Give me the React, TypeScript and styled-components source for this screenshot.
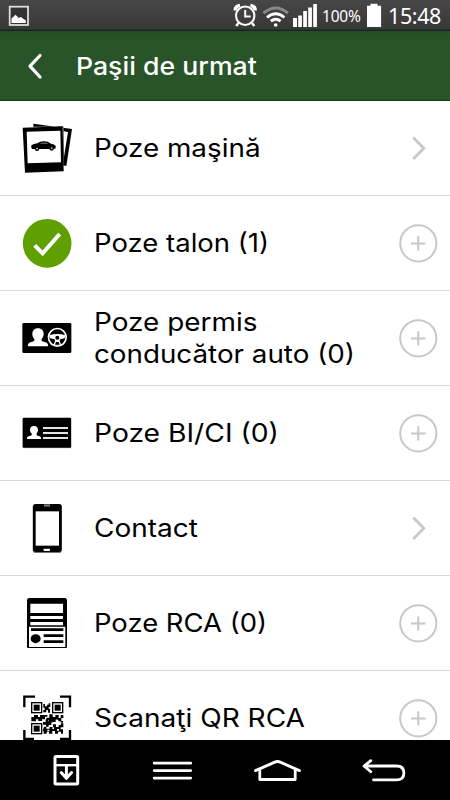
import React from "react";
import styled, { createGlobalStyle } from "styled-components";

const GlobalStyle = createGlobalStyle`
  *, *::before, *::after { box-sizing: border-box; }
  html, body { margin: 0; padding: 0; background: #fff; }
`;

const Screen = styled.div`
  display: flex;
  flex-direction: column;
  width: 450px;
  height: 800px;
  overflow: hidden;
  background: #fff;
  color: #000;
  font-family: Inter, "Noto Sans", sans-serif;
`;

const StatusBar = styled.div`
  flex: 0 0 31px;
  display: flex;
  align-items: center;
  justify-content: space-between;
  background: linear-gradient(#474747, #383838 29px, #1f2422 30px);
  color: #fff;
  font-family: "Noto Sans", sans-serif;
`;

const StatusGroup = styled.div`
  display: flex;
  align-items: center;
  height: 31px;
`;

const StatusText = styled.span<{ $size: number; $width: number; $gap?: number }>`
  width: ${(p) => p.$width}px;
  font-size: ${(p) => p.$size}px;
  letter-spacing: ${(p) => p.$gap ?? 0}px;
  line-height: 32px;
  white-space: nowrap;
`;

const Header = styled.header`
  flex: 0 0 70px;
  display: flex;
  align-items: center;
  background: linear-gradient(#234d22, #295328 10px, #295328 68px, #174018 69px);
  color: #fff;
`;

const BackButton = styled.button`
  width: 76px;
  height: 70px;
  padding: 0;
  border: 0;
  background: none;
`;

const Title = styled.h1`
  margin: 0;
  font-size: 24.5px;
  font-weight: 450;
  line-height: 70px;
  transform: scaleX(1.088);
  transform-origin: left center;
`;

const List = styled.main`
  flex: 1 1 0;
  min-height: 0;
  overflow: hidden;
`;

const Row = styled.div`
  display: flex;
  align-items: center;
  height: 95px;
  padding: 0 12px 0 22px;
  border-bottom: 1px solid #d9d9d9;
`;

const Label = styled.div`
  flex: 1;
  padding-left: 22px;
  font-size: 25px;
  font-weight: 430;
  line-height: 32px;
`;

const Line = styled.span<{ $stretch: number }>`
  display: block;
  white-space: nowrap;
  transform: scaleX(${(p) => p.$stretch});
  transform-origin: left center;
`;

const Drawing = styled.svg`
  display: block;
  flex: none;
`;

const NavBar = styled.nav`
  flex: 0 0 60px;
  display: grid;
  grid-template-columns: repeat(4, 105.5px);
  padding-left: 14px;
  background: #000;
`;

/* Row icons share one grid: three units per pixel, 150 units square. */
const RowIcon = ({ children }: { children: React.ReactNode }) => (
  <Drawing width="50" height="50" viewBox="36 39 150 150">
    {children}
  </Drawing>
);

const PhotosIcon = () => (
  <RowIcon>
    <path d="M70 41 186 57 169 168 160 166V50H70Z" />
    <path d="M161 64 174 66 162 140Z" fill="#fff" />
    <path d="M38 53 158 49 161 184 45 188Z" />
    <path d="M50 65 151 62 153 157 53 160Z" fill="#fff" />
    <path d="M64 106q7-5 18-6 8-6 18-6 13-1 23 7 10 1 14 6v8l-5 2H67l-3-3Z" />
    <circle cx="81" cy="116" r="7" />
    <circle cx="125" cy="115" r="7" />
    <path d="M88 101q8-4 22-3l5 4Z" fill="#666" />
    <g fill="#aaa">
      <circle cx="81" cy="116" r="3" />
      <circle cx="125" cy="115" r="3" />
    </g>
  </RowIcon>
);

const CheckIcon = () => (
  <RowIcon>
    <circle cx="111.5" cy="115" r="73" fill="#5f9f00" />
    <path d="M74 121 98 145 149 87" fill="none" stroke="#fff" strokeWidth="12" />
  </RowIcon>
);

const LicenceIcon = () => (
  <RowIcon>
    <rect x="37" y="69" width="147" height="90" rx="4" />
    <path
      d="M84 85c11 0 17 7 17 17 0 7-3 11-6 15v5c3 4 19 3 19 13v4H54v-4c0-10 16-9 19-13v-5c-4-4-6-8-6-15 0-10 6-17 17-17Z"
      fill="#fff"
    />
    <circle cx="142" cy="112" r="26.5" fill="none" stroke="#fff" strokeWidth="5" />
    <path d="M118 106q24-8 48 0l-2 9-14 3-1 5 5 12h-24l5-12-1-5-14-3Z" fill="#fff" />
    <circle cx="142" cy="113" r="6" />
    <path d="M135 134l3-8h8l3 8Z" />
  </RowIcon>
);

const IdCardIcon = () => (
  <RowIcon>
    <rect x="38" y="69" width="147" height="91" rx="4" fill="#bbb" />
    <rect x="38" y="68" width="145" height="90" rx="3" />
    <path
      d="M72 93c8 0 12 5 12 12 0 5-2 8-4 10v5c2 4 13 2 13 9v3H51v-3c0-7 12-5 14-9v-5c-3-2-5-5-5-10 0-7 4-12 12-12Z"
      fill="#fff"
    />
    <path d="M99 99h75M99 114h75M99 129h75" stroke="#e2e6e4" strokeWidth="6" />
  </RowIcon>
);

const PhoneIcon = () => (
  <RowIcon>
    <rect x="68" y="42" width="88" height="147" rx="10" fill="#777" />
    <rect x="69" y="42" width="86" height="144" rx="9" />
    <path d="M77 64h70v103H77Z" fill="#fff" />
    <path d="M102 43h18v7h-18Z" fill="#777" />
    <rect x="101" y="176" width="19" height="7" rx="2" fill="#fff" />
  </RowIcon>
);

const PolicyIcon = () => (
  <RowIcon>
    <rect x="51" y="39" width="120" height="152" rx="7" />
    <path d="M61 56h98v28H61ZM61 93h98v9H61ZM61 111h98v10H61Z" fill="#fff" />
    <path d="M57 125h109v61H57Z" fill="#fff" />
    <path d="M63 134h97M101 152h59M101 170h59" stroke="#000" strokeWidth="8.5" />
    <ellipse cx="77" cy="161" rx="15" ry="13.5" />
  </RowIcon>
);

const FINDERS: [number, number][] = [
  [63, 66],
  [126, 66],
  [63, 129],
];

const QrIcon = () => (
  <RowIcon>
    <path d="M43 82V50H75M150 50H180V82M43 150V177H72M150 177H180V150" fill="none" stroke="#000" strokeWidth="7" />
    {FINDERS.map(([x, y]) => (
      <g key={`${x}-${y}`}>
        <rect x={x + 2} y={y + 2} width="30" height="30" fill="#fff" stroke="#000" strokeWidth="4" />
        <rect x={x + 8} y={y + 8} width="18" height="18" />
      </g>
    ))}
    <path d="M100 72h5v7h6v-5h5v-4h5v11h-5v5h4v12h-6v-8h-5v7h-9v-7h4v-7h-4Z" />
    <path d="M64 111h8v-6h12v6h6v-6h22v5h-7v8h-9v5H85v-5h-7v6H64Z" />
    <path d="M118 103h10v8h8v-6h10v9h6v-9h8v9h-6v10h-9v-5h-8v7h-8v-6h-5v8h-8v-7h-7v-8h9Z" />
    <path d="M99 126h8v-8h7v6h9v-6h7v9h-6v8h-8v5h-8v-6h-9Z" />
    <path d="M102 140h7v6h10v-5h10v-8h9v8h8v-6h7v-5h7v12h-8v6h7v13h-6v-6h-9v6h-9v-8h-8v8h-10v-6h-7v6h-9v-8h-3Z" />
    <path d="M112 149h6v5h-6ZM127 142h5v5h-5ZM141 147h6v5h-6ZM138 119h5v4h-5Z" fill="#fff" />
    <path d="M152 128h7v-5h-7Z" />
  </RowIcon>
);

const ChevronIcon = () => (
  <Drawing width="40" height="40" viewBox="0 0 40 40" fill="none" stroke="#c7c7cc" strokeWidth="2.8">
    <path d="M15.2 9.6 25.8 20.3 15.2 31" />
  </Drawing>
);

const AddIcon = () => (
  <Drawing width="40" height="40" viewBox="0 0 40 40" fill="none" stroke="#c7c7cc" strokeWidth="2">
    <circle cx="20.3" cy="20.3" r="18.1" />
    <path d="M13 20.4h14.6M20.3 13.2v14.4" />
  </Drawing>
);

type Step = {
  icon: React.ReactNode;
  lines: [string, number][];
  action: "open" | "add";
};

const steps: Step[] = [
  { icon: <PhotosIcon />, lines: [["Poze maşină", 1.114]], action: "open" },
  { icon: <CheckIcon />, lines: [["Poze talon (1)", 1.1]], action: "add" },
  { icon: <LicenceIcon />, lines: [["Poze permis", 1.117], ["conducător auto (0)", 1.111]], action: "add" },
  { icon: <IdCardIcon />, lines: [["Poze BI/CI (0)", 1.13]], action: "add" },
  { icon: <PhoneIcon />, lines: [["Contact", 1.12]], action: "open" },
  { icon: <PolicyIcon />, lines: [["Poze RCA (0)", 1.097]], action: "add" },
  { icon: <QrIcon />, lines: [["Scanaţi QR RCA", 1.122]], action: "add" },
];

export default function App() {
  return (
    <Screen>
      <GlobalStyle />
      <StatusBar>
        <Drawing width="40" height="31" viewBox="0 0 40 31">
          <rect x="9.7" y="6.7" width="18.3" height="18.3" fill="#333" stroke="#ddd" strokeWidth="1.8" />
          <path d="M11.5 23v-4.5l4-3.7 3.3 3.3 2-1.2 5 3.5V23Z" fill="#fff" />
        </Drawing>
        <StatusGroup>
          <Drawing width="97" height="31" viewBox="225 0 97 31" fill="none" stroke="#fff">
            <circle cx="245.2" cy="15.7" r="9.2" strokeWidth="2" />
            <path d="M245.2 10v6.5h5.4" strokeWidth="2" />
            <path d="M235.2 10.5q0-4.5 4.8-5M255.2 10.5q0-4.5-4.8-5" strokeWidth="3.4" />
            <path d="m238.5 23-2.3 3M252 23l2.3 3" strokeWidth="2.5" />
            <path d="M263.4 13.2q12.3-10.5 24.6 0" stroke="#888" strokeWidth="3" />
            <path d="M267 17.5q8.7-7.5 17.4 0M270.8 21.2q4.9-4 9.8 0" strokeWidth="2.8" />
            <circle cx="275.7" cy="25" r="1.8" fill="#fff" stroke="none" />
            <path
              d="M293 27v-9h4v9ZM298.2 27V15.5h3.7V27ZM303.2 27V11h3.7v16ZM308.2 27V7.5h3.7V27ZM313.2 27V4h3.7v23Z"
              fill="#fff"
              stroke="none"
            />
          </Drawing>
          <StatusText $size={15.5} $width={43} $gap={-0.2}>100%</StatusText>
          <Drawing width="23" height="31" viewBox="365 0 23 31" fill="#fff">
            <path d="M367 5.7h3.5V3.7h7v2h3.6V27H367Z" />
          </Drawing>
          <StatusText $size={21.5} $width={62} $gap={-0.4}>15:48</StatusText>
        </StatusGroup>
      </StatusBar>
      <Header>
        <BackButton aria-label="Înapoi">
          <Drawing width="76" height="70" viewBox="0 31 76 70" fill="none" stroke="#fff" strokeWidth="3.2" strokeLinecap="round" strokeLinejoin="round">
            <path d="M40 55.5 30 66.2 40 77" />
          </Drawing>
        </BackButton>
        <Title>Paşii de urmat</Title>
      </Header>
      <List>
        {steps.map((step, i) => (
          <Row key={i}>
            {step.icon}
            <Label>
              {step.lines.map(([text, stretch]) => (
                <Line key={text} $stretch={stretch}>{text}</Line>
              ))}
            </Label>
            {step.action === "open" ? <ChevronIcon /> : <AddIcon />}
          </Row>
        ))}
      </List>
      <NavBar>
        <Drawing width="105" height="60" viewBox="14 740 105 60" fill="none" stroke="#fff" strokeWidth="3">
          <rect x="55" y="756.5" width="22.7" height="27.5" rx="1" />
          <path d="M55 765.2h22.7" strokeWidth="2.4" />
          <path d="M66.4 766v12" />
          <path d="m61.2 772.5 5.2 5.8 5.2-5.8" strokeLinecap="round" strokeLinejoin="round" />
        </Drawing>
        <Drawing width="105" height="60" viewBox="119.5 740 105 60" fill="none" stroke="#fff" strokeWidth="2.8" strokeLinecap="round">
          <path d="M153.7 763.2h36.5M153.7 770.6h36.5M153.7 778.1h36.5" />
        </Drawing>
        <Drawing width="105" height="60" viewBox="225 740 105 60" fill="none" stroke="#fff" strokeWidth="2.8" strokeLinecap="round" strokeLinejoin="round">
          <path d="m255.5 770.6 19.3-8.5q2.7-1.2 5.4 0l19.3 8.5M259.8 770.5v9h35.4v-9" />
        </Drawing>
        <Drawing width="105" height="60" viewBox="330.5 740 105 60" fill="none" stroke="#fff" strokeWidth="2.8" strokeLinecap="round" strokeLinejoin="round">
          <path d="M370.3 760.7 363.5 766l6.8 5.7M364 766h32q7.4 0 7.4 6.9t-7.4 6.9h-23" />
        </Drawing>
      </NavBar>
    </Screen>
  );
}
